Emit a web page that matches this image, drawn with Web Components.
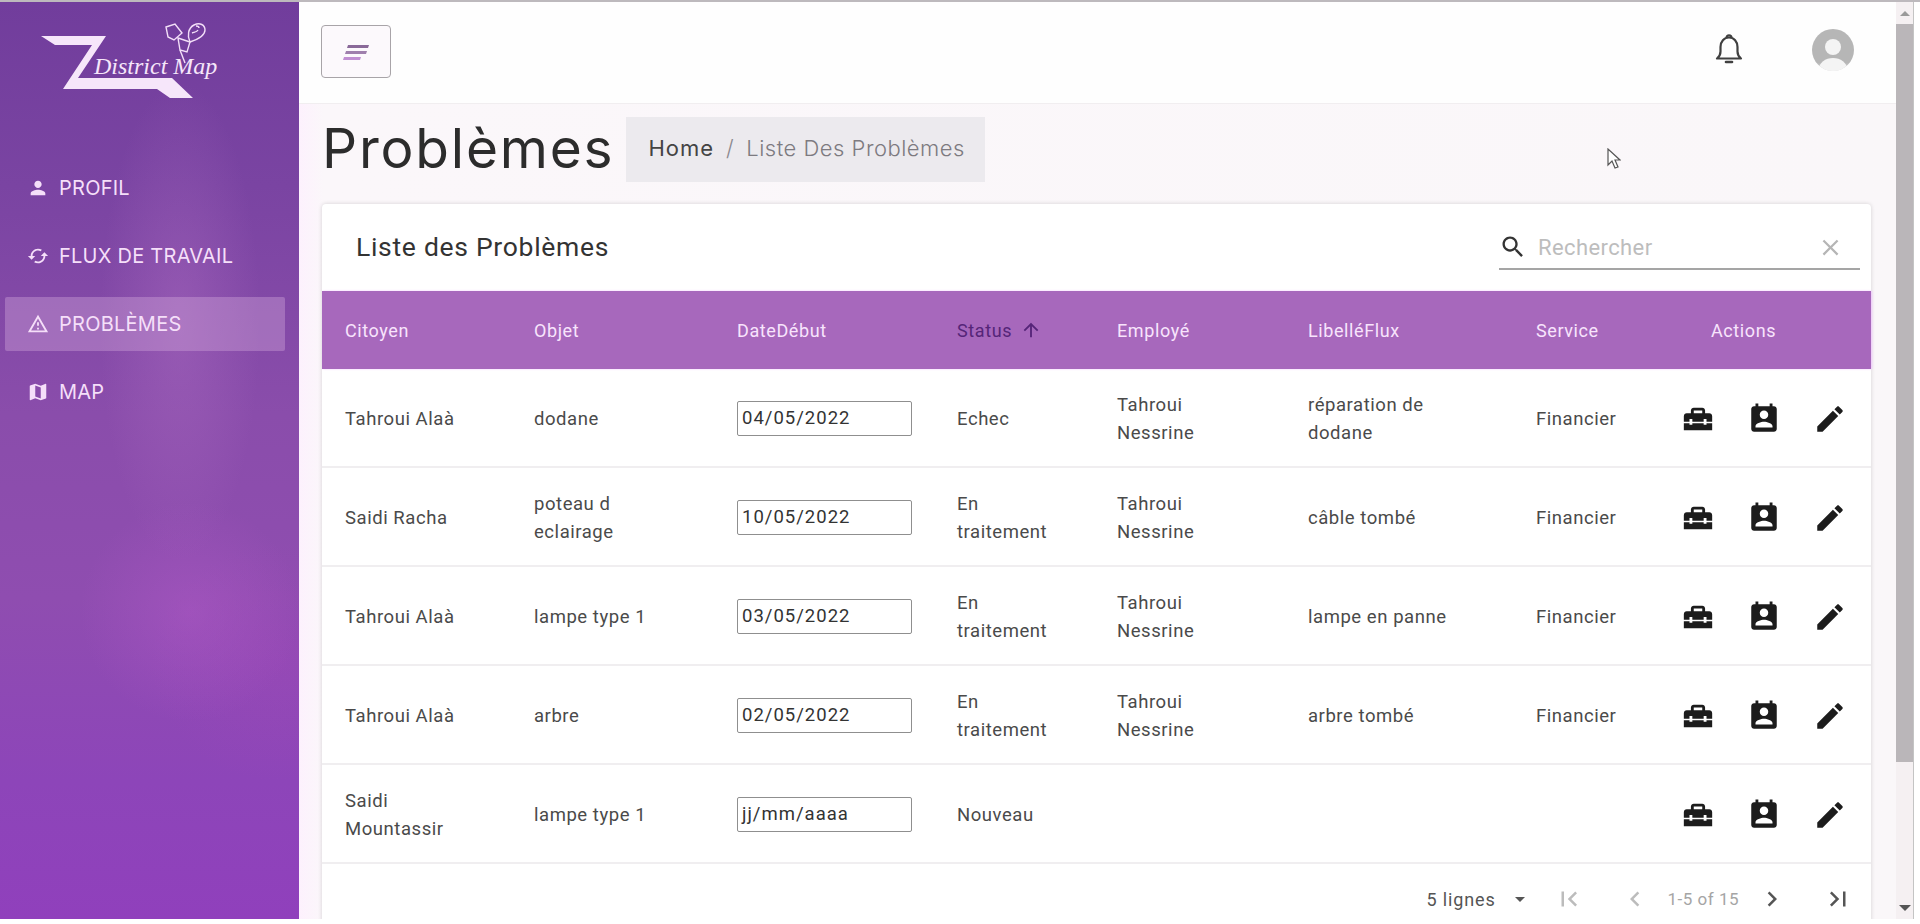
<!DOCTYPE html>
<html lang="fr">
<head>
<meta charset="utf-8">
<title>District Map</title>
<style>
    html, body { margin: 0; height: 924px; overflow: hidden; background: #fff; }
    body { font-family: Roboto, "Liberation Sans", sans-serif; }
</style>
</head>
<body>
<dm-app>
    <dm-sidebar slot="side">
        <dm-nav-item icon="person">PROFIL</dm-nav-item>
        <dm-nav-item icon="sync">FLUX DE TRAVAIL</dm-nav-item>
        <dm-nav-item icon="warning" active>PROBLÈMES</dm-nav-item>
        <dm-nav-item icon="map">MAP</dm-nav-item>
    </dm-sidebar>
    <dm-topbar></dm-topbar>
    <dm-page-head title="Problèmes" home="Home" current="Liste Des Problèmes"></dm-page-head>
    <dm-table-card></dm-table-card>
</dm-app>

<script>
const PATHS = {
    person: 'M12 12c2.21 0 4-1.79 4-4s-1.79-4-4-4-4 1.79-4 4 1.79 4 4 4zm0 2c-2.67 0-8 1.34-8 4v2h16v-2c0-2.66-5.33-4-8-4z',
    sync: 'M12 4V1L8 5l4 4V6c3.31 0 6 2.69 6 6 0 1.01-.25 1.97-.7 2.8l1.46 1.46C19.54 15.03 20 13.57 20 12c0-4.42-3.58-8-8-8zm0 14c-3.31 0-6-2.69-6-6 0-1.01.25-1.97.7-2.8L5.24 7.74C4.46 8.97 4 10.43 4 12c0 4.42 3.58 8 8 8v3l4-4-4-4v3z',
    warning: 'M12 5.99L19.53 19H4.47L12 5.99M12 2L1 21h22L12 2zm1 14h-2v2h2v-2zm0-6h-2v4h2v-4z',
    map: 'M20.5 3l-.16.03L15 5.1 9 3 3.36 4.9c-.21.07-.36.25-.36.48V20.5c0 .28.22.5.5.5l.16-.03L9 18.9l6 2.1 5.64-1.9c.21-.07.36-.25.36-.48V3.5c0-.28-.22-.5-.5-.5zM15 19l-6-2.11V5l6 2.11V19z',
    search: 'M15.5 14h-.79l-.28-.27C15.41 12.59 16 11.11 16 9.5 16 5.91 13.09 3 9.5 3S3 5.91 3 9.5 5.91 16 9.5 16c1.61 0 3.09-.59 4.23-1.57l.27.28v.79l5 4.99L20.49 19l-4.99-5zm-6 0C7.01 14 5 11.99 5 9.5S7.01 5 9.5 5 14 7.01 14 9.5 11.99 14 9.5 14z',
    close: 'M19 6.41L17.59 5 12 10.59 6.41 5 5 6.41 10.59 12 5 17.59 6.41 19 12 13.41 17.59 19 19 17.59 13.41 12z',
    up: 'M4 12l1.41 1.41L11 7.83V20h2V7.83l5.58 5.59L20 12l-8-8-8 8z',
    toolbox: 'M18 16h-2v-1H8v1H6v-1H2v5h20v-5h-4zm2-8h-3V6c0-1.1-.9-2-2-2H9c-1.1 0-2 .9-2 2v2H4c-1.1 0-2 .9-2 2v4h4v-2h2v2h8v-2h2v2h4v-4c0-1.1-.9-2-2-2zm-5 0H9V6h6v2z',
    contact: 'M19 3h-1V1h-2v2H8V1H6v2H5c-1.11 0-2 .9-2 2v14c0 1.1.89 2 2 2h14c1.1 0 2-.9 2-2V5c0-1.1-.9-2-2-2zm-7 3c1.66 0 3 1.34 3 3s-1.34 3-3 3-3-1.34-3-3 1.34-3 3-3zm6 12H6v-1c0-2 4-3.1 6-3.1s6 1.1 6 3.1v1z',
    edit: 'M3 17.25V21h3.75L17.81 9.94l-3.75-3.75L3 17.25zM20.71 7.04c.39-.39.39-1.02 0-1.41l-2.34-2.34c-.39-.39-1.02-.39-1.41 0l-1.83 1.83 3.75 3.75 1.83-1.83z',
    drop: 'M7 10l5 5 5-5z',
    first: 'M18.41 16.59L13.82 12l4.59-4.59L17 6l-6 6 6 6zM6 6h2v12H6z',
    prev: 'M15.41 7.41L14 6l-6 6 6 6 1.41-1.41L10.83 12z',
    next: 'M10 6L8.59 7.41 13.17 12l-4.58 4.59L10 18l6-6z',
    last: 'M5.59 7.41L10.18 12l-4.59 4.59L7 18l6-6-6-6zM16 6h2v12h-2z'
};

const icon = ( name, size, color ) => `<svg width="${size}" height="${size}" viewBox="0 0 24 24" fill="${color || 'currentColor'}" style="display:block;flex:none"><path d="${PATHS[name]}"/></svg>`;

customElements.define( 'dm-app', class extends HTMLElement {

    constructor() {
        super();
        this.attachShadow({ mode: 'open' });
        this.shadowRoot.innerHTML = `
        <style>
            :host { display: flex; flex-direction: column; height: 924px; }
            .line { height: 2px; background: #bdb9bd; flex: none; }
            .body { display: flex; height: 917px; flex: none; overflow: hidden; position: relative; }
            main {
                width: 1597px;
                flex: none;
                overflow: hidden;
                background: linear-gradient(90deg, #fdf1fd 0, #fbf7fa 24px, #faf7f9 100%);
            }
            .bar {
                width: 17px;
                flex: none;
                display: flex;
                flex-direction: column;
                background: #f5f0f2;
                border-right: 1px solid #c4c4c4;
                box-sizing: content-box;
            }
            .up, .down { height: 22px; display: flex; justify-content: center; align-items: center; flex: none; }
            .thumb { height: 738px; background: #bab6b9; flex: none; }
            .track { flex: 1; }
            .up::before { content: ''; border: 5px solid transparent; border-top: 0; border-bottom: 5px solid #9a9a9a; }
            .down::before { content: ''; border: 6px solid transparent; border-bottom: 0; border-top: 6px solid #555; }
            .cursor { position: absolute; left: 1607px; top: 146px; }
        </style>
        <div class="line"></div>
        <div class="body">
            <slot name="side"></slot>
            <main><slot></slot></main>
            <div class="bar">
                <div class="up"></div>
                <div class="thumb"></div>
                <div class="track"></div>
                <div class="down"></div>
            </div>
            <svg class="cursor" width="14" height="22" viewBox="0 0 14 22" fill="#fff" stroke="#555" stroke-width="1.2"><path d="M1 1v16l4-4 3 7 3-1-3-7h5z"/></svg>
        </div>
        `;
    }
})

customElements.define( 'dm-logo', class extends HTMLElement {

    constructor() {
        super();
        this.attachShadow({ mode: 'open' });
        this.shadowRoot.innerHTML = `
        <style>
            :host { display: block; height: 110px; flex: none; }
            svg { display: block; }
        </style>
        <svg width="299" height="110" viewBox="0 0 299 110">
            <polygon fill="#f6e6fa" points="41,34 106,34 78,76 172,76 193,96 170,96 157,87 63,87 92,43 55,43"/>
            <text x="94" y="72" font-family="'Liberation Serif', serif" font-style="italic" font-size="24" fill="#f6e6fa">District Map</text>
            <g fill="none" stroke="#f3dff8" stroke-width="1.4">
                <path d="M166 25l9 -3 7 9 -8 7 -6 -3z"/>
                <path d="M178 36l12 4 -3 10 -7 -2z"/>
                <path d="M180 48l5 13"/>
                <path d="M190 40c-3 -6 -2 -14 4 -17 6 -3 11 0 11 5 0 5 -6 9 -15 12z"/>
                <path d="M192 31c3 -1 5 -1 6 -3 M196 24c2 0 3 1 3 2"/>
            </g>
        </svg>
        `;
    }
})

customElements.define( 'dm-sidebar', class extends HTMLElement {

    constructor() {
        super();
        this.attachShadow({ mode: 'open' });
        this.shadowRoot.innerHTML = `
        <style>
            :host {
                display: block;
                width: 299px;
                flex: none;
                background:
                    radial-gradient(ellipse 80px 240px at 180px 320px, rgba(176,112,196,.4), transparent),
                    radial-gradient(ellipse 110px 110px at 190px 610px, rgba(178,90,200,.45), transparent),
                    radial-gradient(ellipse 130px 120px at 280px 660px, rgba(170,70,190,.25), transparent),
                    linear-gradient(180deg, #713d9c 0%, #7a44a2 20%, #8a4dab 45%, #8f4db0 65%, #8d45b9 85%, #9040bc 100%);
            }
            nav { display: flex; flex-direction: column; gap: 14px; padding-top: 49px; }
        </style>
        <dm-logo></dm-logo>
        <nav><slot></slot></nav>
        `;
    }
})

customElements.define( 'dm-nav-item', class extends HTMLElement {

    constructor() {
        super();
        this.attachShadow({ mode: 'open' });
        this.shadowRoot.innerHTML = `
        <style>
            :host {
                display: flex;
                align-items: center;
                gap: 10px;
                height: 54px;
                margin-left: 5px;
                width: 280px;
                padding-left: 22px;
                box-sizing: border-box;
                color: #f5dff9;
                font: 400 20px Inter, "Liberation Sans", sans-serif;
                letter-spacing: .25px;
                border-radius: 2px;
            }
            :host([active]) { background: rgba(214,170,222,.38); }
            :host([icon="sync"]) svg { transform: rotate(90deg); }
        </style>
        ${ icon( this.getAttribute( 'icon' ), 22 ) }
        <span><slot></slot></span>
        `;
    }
})

customElements.define( 'dm-topbar', class extends HTMLElement {

    constructor() {
        super();
        this.attachShadow({ mode: 'open' });
        this.shadowRoot.innerHTML = `
        <style>
            :host {
                display: flex;
                align-items: center;
                height: 102px;
                padding: 0 42px 4px 22px;
                box-sizing: border-box;
                background: #fefefe;
                border-bottom: 1px solid #f1eef0;
            }
            .toggle {
                width: 70px;
                height: 53px;
                margin-top: 2px;
                box-sizing: border-box;
                border: 1px solid #a8a4a8;
                border-radius: 4px;
                background: #fcf9fc;
                display: flex;
                align-items: center;
                justify-content: center;
            }
            .bell { margin-left: auto; margin-right: 69px; margin-bottom: 3px; }
            .bell svg { display: block; }
            .avatar {
                width: 42px;
                height: 42px;
                margin-bottom: 2px;
                border-radius: 50%;
                background: linear-gradient(180deg, #b6b6b6 80%, #e4e4e4 100%);
                position: relative;
                overflow: hidden;
            }
            .avatar::before {
                content: '';
                position: absolute;
                left: 13px;
                top: 10px;
                width: 16px;
                height: 16px;
                border-radius: 50%;
                background: #f4f4f4;
            }
            .avatar::after {
                content: '';
                position: absolute;
                left: 7px;
                top: 29px;
                width: 28px;
                height: 22px;
                border-radius: 50%;
                background: #f4f4f4;
            }
        </style>
        <div class="toggle">
            <svg width="28" height="16" viewBox="0 0 28 16">
                <polygon points="6,1 27,1 26,4 5,4" fill="#8a6a99"/>
                <polygon points="4,7 25,7 24,10 3,10" fill="#9f80ad"/>
                <polygon points="2,13 19,13 18,16 1,16" fill="#c08fd2"/>
            </svg>
        </div>
        <div class="bell">
            <svg width="28" height="32" viewBox="0 0 28 32" fill="none" stroke="#404040" stroke-width="2.2" stroke-linejoin="round">
                <path d="M2 25.5h24c-2.5-2-3.5-4-3.5-7v-4.5c0-5.5-3.5-9.500-8.500-9.500s-8.500 4-8.500 9.500v4.500c0 3-1 5-3.500 7z"/>
                <path d="M11.500 4.800c0-1.400 1-2.500 2.500-2.500s2.500 1.100 2.500 2.500"/>
                <path d="M11 29h6" stroke-width="2.600" stroke-linecap="round"/>
            </svg>
        </div>
        <div class="avatar"></div>
        `;
    }
})

customElements.define( 'dm-page-head', class extends HTMLElement {

    constructor() {
        super();
        this.attachShadow({ mode: 'open' });
        this.shadowRoot.innerHTML = `
        <style>
            :host {
                display: flex;
                align-items: center;
                gap: 12px;
                padding: 13px 0 22px 23px;
                font-family: Inter, "Liberation Sans", sans-serif;
            }
            h1 { margin: 0 0 2px; font-size: 55px; font-weight: 400; line-height: 63px; color: #2c2c2c; letter-spacing: 1.8px; }
            .crumb {
                display: flex;
                align-items: center;
                height: 65px;
                width: 359px;
                box-sizing: border-box;
                padding: 0 0 3px 22px;
                background: #eceaee;
                font-size: 22px;
                color: #7d7a80;
                font-weight: 300;
                letter-spacing: .5px;
            }
            .crumb b { font-weight: 400; color: #444; letter-spacing: 1px; }
            .sep { margin: 0 12px; color: #8b888e; }
        </style>
        <h1>${ this.getAttribute( 'title' ) }</h1>
        <div class="crumb"><b>${ this.getAttribute( 'home' ) }</b><span class="sep">/</span><span>${ this.getAttribute( 'current' ) }</span></div>
        `;
    }
})

customElements.define( 'dm-date', class extends HTMLElement {

    constructor() {
        super();
        this.attachShadow({ mode: 'open' });
        this.shadowRoot.innerHTML = `
        <style>
            :host {
                display: flex;
                align-items: center;
                width: 175px;
                height: 35px;
                box-sizing: border-box;
                padding: 0 0 2px 4px;
                border: 1px solid #8f8f8f;
                border-radius: 2px;
                background: #fff;
                color: #333;
                font-size: 18.500px;
                letter-spacing: 1px;
            }
        </style>
        <slot></slot>
        `;
    }
})

customElements.define( 'dm-row', class extends HTMLElement {

    constructor() {
        super();
        this.attachShadow({ mode: 'open' });
    }

    connectedCallback() {
        const d = JSON.parse( this.getAttribute( 'data' ) );
        this.shadowRoot.innerHTML = `
        <style>
            :host {
                display: grid;
                grid-template-columns: 189px 203px 220px 160px 191px 228px 145px 1fr;
                align-items: center;
                height: 99px;
                box-sizing: border-box;
                padding: 2px 0 0 23px;
                border-bottom: 2px solid #f0eef0;
                font-size: 18.500px;
                line-height: 28px;
                letter-spacing: .55px;
                color: #4a4a4a;
            }
            .c { padding-right: 56px; }
            .acts { display: flex; gap: 32px; color: #1c1c1c; }
        </style>
        <div class="c">${ d[0] }</div>
        <div class="c">${ d[1] }</div>
        <dm-date>${ d[2] }</dm-date>
        <div class="c">${ d[3] }</div>
        <div class="c">${ d[4] }</div>
        <div class="c">${ d[5] }</div>
        <div class="c">${ d[6] }</div>
        <div class="acts">${ icon( 'toolbox', 34 ) }${ icon( 'contact', 34 ) }${ icon( 'edit', 34 ) }</div>
        `;
    }
})

customElements.define( 'dm-table-card', class extends HTMLElement {

    constructor() {
        super();
        this.attachShadow({ mode: 'open' });
        this.#render();
    }

    #render() {
        const rows = [
            [ 'Tahroui Alaà', 'dodane', '04/05/2022', 'Echec', 'Tahroui Nessrine', 'réparation de dodane', 'Financier' ],
            [ 'Saidi Racha', 'poteau d eclairage', '10/05/2022', 'En traitement', 'Tahroui Nessrine', 'câble tombé', 'Financier' ],
            [ 'Tahroui Alaà', 'lampe type 1', '03/05/2022', 'En traitement', 'Tahroui Nessrine', 'lampe en panne', 'Financier' ],
            [ 'Tahroui Alaà', 'arbre', '02/05/2022', 'En traitement', 'Tahroui Nessrine', 'arbre tombé', 'Financier' ],
            [ 'Saidi Mountassir', 'lampe type 1', 'jj/mm/aaaa', 'Nouveau', '', '', '' ]
        ];
        this.shadowRoot.innerHTML = `
        <style>
            :host {
                display: block;
                width: 1549px;
                margin-left: 23px;
                background: #fff;
                box-shadow: 0 0 4px rgba(0,0,0,.16);
                border-radius: 4px 4px 0 0;
            }
            .tools {
                display: flex;
                align-items: center;
                height: 87px;
                padding: 0 11px 0 34px;
            }
            h2 { margin: 0 0 2px; font-size: 26.5px; font-weight: 400; color: #333; letter-spacing: .7px; }
            .search {
                margin-left: auto;
                width: 361px;
                height: 44px;
                margin-top: 1px;
                box-sizing: border-box;
                display: flex;
                align-items: center;
                border-bottom: 2px solid #a5a5a5;
                color: #333;
            }
            .search span { color: #bdbdbd; font-size: 22px; margin: 0 0 0 11px; letter-spacing: .4px; }
            .search .x { margin-left: auto; margin-right: 16px; color: #b5b5b5; }
            .head {
                display: grid;
                grid-template-columns: 189px 203px 220px 160px 191px 228px 175px 1fr;
                align-items: center;
                height: 78px;
                padding-left: 23px;
                background: #a768bc;
                color: #f8e4fc;
                font-size: 18px;
                font-weight: 400;
                letter-spacing: .6px;
                box-shadow: 1px 0 2px #f2c8ff;
            }
            .status { display: flex; align-items: center; gap: 8px; color: #552578; }
            .foot {
                display: flex;
                align-items: center;
                height: 70px;
                padding: 0 18px 0 0;
                justify-content: flex-end;
                color: #6f6f6f;
                font-size: 18px;
            }
            .lines { color: #555; letter-spacing: .85px; }
            .dis { color: #bcbcbc; }
            .on { color: #555; }
            .range { color: #a5a5a5; margin: 0 18px 0 18px; font-size: 17px; letter-spacing: .5px; }
        </style>
        <div class="tools">
            <h2>Liste des Problèmes</h2>
            <div class="search">
                ${ icon( 'search', 28 ) }
                <span>Rechercher</span>
                <div class="x">${ icon( 'close', 27 ) }</div>
            </div>
        </div>
        <div class="head">
            <div>Citoyen</div>
            <div>Objet</div>
            <div>DateDébut</div>
            <div class="status">Status ${ icon( 'up', 22 ) }</div>
            <div>Employé</div>
            <div>LibelléFlux</div>
            <div>Service</div>
            <div>Actions</div>
        </div>
        ${ rows.map( r => `<dm-row data='${ JSON.stringify( r ) }'></dm-row>` ).join( '' ) }
        <div class="foot">
            <span class="lines">5 lignes</span>
            <span class="on" style="margin:0 22px 0 12px">${ icon( 'drop', 24 ) }</span>
            <span class="dis" style="margin-right:36px">${ icon( 'first', 30 ) }</span>
            <span class="dis">${ icon( 'prev', 30 ) }</span>
            <span class="range">1-5 of 15</span>
            <span class="on" style="margin-right:36px">${ icon( 'next', 30 ) }</span>
            <span class="on">${ icon( 'last', 30 ) }</span>
        </div>
        `;
    }
})
</script>
</body>
</html>
